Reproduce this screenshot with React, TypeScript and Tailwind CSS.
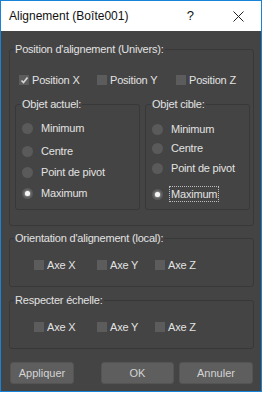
import React from 'react';

const font = { fontFamily: '"Liberation Sans", Arial, sans-serif' };

function Check({ label, checked = false, className = '' }: { label: string; checked?: boolean; className?: string }) {
  return (
    <div className={`flex items-center h-[16px] ${className}`}>
      <span className="w-[10px] h-[10px] bg-[#5c5c5c] flex items-center justify-center shrink-0">
        {checked && (
          <svg width="9" height="9" viewBox="0 0 9 9">
            <path d="M1.5 4.5 L3.5 6.5 L7.5 1.5" stroke="#d8d8d8" strokeWidth="1.6" fill="none" />
          </svg>
        )}
      </span>
      <span className="ml-[3px] text-[11px] tracking-[-0.2px] leading-[16px] text-[#e2e2e2] whitespace-nowrap">{label}</span>
    </div>
  );
}

function Radio({ label, on = false, focus = false, className = '' }: { label: string; on?: boolean; focus?: boolean; className?: string }) {
  return (
    <div className={`flex items-center h-[16px] ${className}`}>
      <span className="w-[11px] h-[11px] rounded-full bg-[#5a5a5a] flex items-center justify-center shrink-0">
        {on && <span className="w-[5px] h-[5px] rounded-full bg-[#f4f4f4] shadow-[0_0_2px_#ffffff]" />}
      </span>
      <span
        className={`ml-[7px] text-[11px] tracking-[-0.2px] leading-[14px] text-[#e2e2e2] px-[1px] whitespace-nowrap ${
          focus ? 'outline outline-1 outline-dotted outline-[#bdbdbd]' : 'outline-none'
        }`}
      >
        {label}
      </span>
    </div>
  );
}

function Group({ title, className = '', children }: { title: string; className?: string; children: React.ReactNode }) {
  return (
    <fieldset className={`border border-[#383838] rounded-[3px] pl-[4px] ${className}`}>
      <legend className="px-[1px] text-[11px] tracking-[-0.2px] leading-[16px] text-[#e2e2e2] whitespace-nowrap">{title}</legend>
      {children}
    </fieldset>
  );
}

function Btn({ label, className = '' }: { label: string; className?: string }) {
  return (
    <button className={`h-[22px] rounded-[3px] bg-[#5e5e5e] border border-[#545454] text-[11px] text-[#d4d4d4] ${className}`}>
      {label}
    </button>
  );
}

export default function App() {
  return (
    <div style={font} className="w-[262px] h-[393px] bg-white">
      <div className="w-[262px] h-[392px] border border-[#1883d7] flex flex-col">
        <div className="h-[30px] bg-white flex items-center shrink-0">
          <span className="ml-[8px] text-[12px] text-[#111111]">Alignement (Boîte001)</span>
          <span className="ml-auto mr-[39px] text-[13px] text-[#111111]">?</span>
          <svg className="mr-[17px]" width="11" height="11" viewBox="0 0 11 11">
            <path d="M0.5 0.5 L10.5 10.5 M10.5 0.5 L0.5 10.5" stroke="#222222" strokeWidth="1" />
          </svg>
        </div>
        <div className="flex-1 bg-[#444444] pl-[8px] pr-[7px] pt-[10px] flex flex-col">
          <Group title="Position d'alignement (Univers):" className="pb-[15px] pr-[3px]">
            <div className="flex mt-[15px] ml-[5px]">
              <Check label="Position X" checked className="w-[78px]" />
              <Check label="Position Y" className="w-[79px]" />
              <Check label="Position Z" />
            </div>
            <div className="flex gap-[5px] mt-[8px] ml-[1px]">
              <Group title="Objet actuel:" className="w-[125px] h-[114px] pl-[5px]">
                <Radio label="Minimum" className="mt-[8px] ml-[1px]" />
                <Radio label="Centre" className="mt-[7px] ml-[1px]" />
                <Radio label="Point de pivot" className="mt-[5px] ml-[1px]" />
                <Radio label="Maximum" on className="mt-[5px] ml-[1px]" />
              </Group>
              <Group title="Objet cible:" className="flex-1 h-[114px] pl-[5px]">
                <Radio label="Minimum" className="mt-[9px] ml-[1px]" />
                <Radio label="Centre" className="mt-[3px] ml-[1px]" />
                <Radio label="Point de pivot" className="mt-[4px] ml-[1px]" />
                <Radio label="Maximum" on focus className="mt-[10px] ml-[1px]" />
              </Group>
            </div>
          </Group>
          <Group title="Orientation d'alignement (local):" className="mt-[4px] h-[57px]">
            <div className="flex mt-[11px] ml-[20px]">
              <Check label="Axe X" className="w-[63px]" />
              <Check label="Axe Y" className="w-[58px]" />
              <Check label="Axe Z" />
            </div>
          </Group>
          <Group title="Respecter échelle:" className="mt-[5px] h-[57px]">
            <div className="flex mt-[11px] ml-[20px]">
              <Check label="Axe X" className="w-[63px]" />
              <Check label="Axe Y" className="w-[58px]" />
              <Check label="Axe Z" />
            </div>
          </Group>
          <div className="flex mt-[13px] pl-[1px]">
            <Btn label="Appliquer" className="w-[64px]" />
            <Btn label="OK" className="w-[73px] ml-[27px]" />
            <Btn label="Annuler" className="w-[74px] ml-[5px]" />
          </div>
        </div>
      </div>
    </div>
  );
}
